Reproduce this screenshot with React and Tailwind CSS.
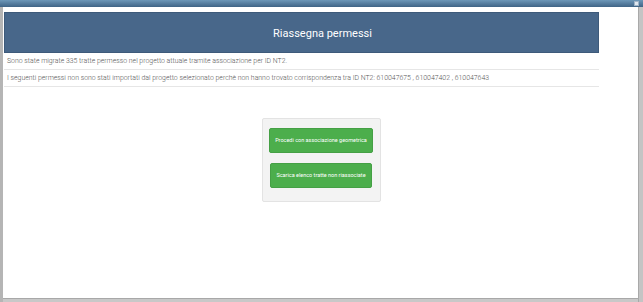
export default function App() {
  return (
    <div className="w-[643px] h-[302px] bg-[#c8c8c8] flex flex-col overflow-hidden" style={{ fontFamily: 'Roboto, "Noto Sans", sans-serif' }}>
      <div className="h-[7px] shrink-0 bg-gradient-to-b from-[#6d97b8] to-[#3f6486] flex justify-end items-start pr-[4px] pt-[1px]">
        <div className="w-[5px] h-[5px] bg-[#dfe7ef] border border-[#9fb3c6]" />
      </div>
      <div className="flex flex-1 min-h-0">
        <div className="w-[3px] bg-[#b5b5b5] shrink-0" />
        <div className="flex-1 bg-white pt-[5px] pb-[4px] flex flex-col mb-[3px] border-b border-[#a8a8a8]">
          <div className="w-[595px] ml-[1px]">
            <div className="h-[41px] bg-[#48678a] border border-[#3e5a7a] flex items-center justify-center pl-[42px] pt-[1px]">
              <h1 className="text-white text-[11px] font-normal leading-none">Riassegna permessi</h1>
            </div>
            <p className="text-[6.9px] text-[#555] font-light px-[3px] py-[4px] leading-[8px] border-b border-[#e6e6e6]">
              Sono state migrate 335 tratte permesso nel progetto attuale tramite associazione per ID NT2.
            </p>
            <p className="text-[6.9px] text-[#555] font-light px-[3px] py-[4px] leading-[8px] border-b border-[#e6e6e6]">
              I seguenti permessi non sono stati importati dal progetto selezionato perchè non hanno trovato corrispondenza tra ID NT2: 610047675 , 610047402 , 610047643
            </p>
          </div>
          <div className="flex justify-center mt-[31px] pl-[1px]">
            <div className="w-[119px] h-[84px] bg-[#f3f3f3] border border-[#e3e3e3] rounded-[2px] flex flex-col items-center pt-[9px] gap-[10px]">
              <button className="w-[104px] h-[25px] bg-[#4cae4c] text-white text-[5.5px] rounded-[2px] border border-[#45a045]">
                Procedi con associazione geometrica
              </button>
              <button className="w-[102px] h-[25px] bg-[#4cae4c] text-white text-[5.5px] rounded-[2px] border border-[#45a045]">
                Scarica elenco tratte non riassociate
              </button>
            </div>
          </div>
        </div>
        <div className="w-[5px] bg-[#c4c4c4] shrink-0 border-l border-[#a9a9a9]" />
      </div>
    </div>
  )
}
